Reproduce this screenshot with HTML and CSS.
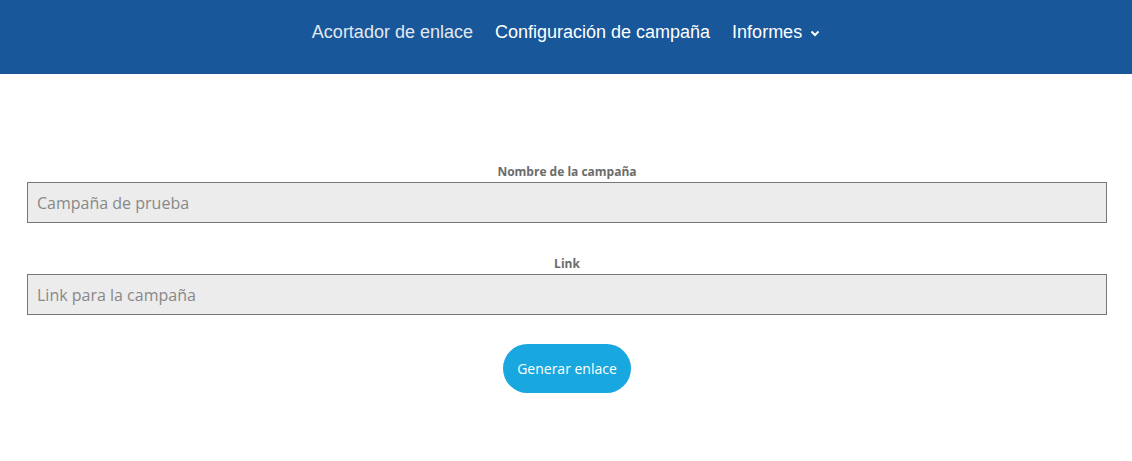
FILE: index.html
```html
<!DOCTYPE html>
<html lang="es">

<head>
    <meta charset="UTF-8">
    <meta name="viewport" content="width=device-width, initial-scale=1.0">
    <title>Acortador de enlace</title>
    <link rel="stylesheet" href="styles.css">
</head>

<body>

    <!-- barra de navegación -->
    <header class="topbar">
        <nav class="menu">
            <a href="#" class="menu_item dim">Acortador de enlace</a>
            <a href="#" class="menu_item">Configuración de campaña</a>
            <a href="#" class="menu_item">Informes
                <svg class="caret" width="10" height="7" viewBox="0 0 10 7">
                    <path d="M1.5 1.5 L5 5 L8.5 1.5" fill="none" stroke="#fff" stroke-width="2" />
                </svg>
            </a>
        </nav>
    </header>

    <!-- formulario de campaña -->
    <main class="form">
        <div class="field">
            <label class="field_label" for="campaign">Nombre de la campaña</label>
            <input class="field_input" id="campaign" type="text" placeholder="Campaña de prueba">
        </div>

        <div class="field last">
            <label class="field_label" for="link">Link</label>
            <input class="field_input" id="link" type="text" placeholder="Link para la campaña">
        </div>

        <div class="actions">
            <button class="btn" type="button">Generar enlace</button>
        </div>
    </main>

</body>

</html>
```

FILE: styles.css
```css
* {
    margin: 0;
    padding: 0;
    box-sizing: border-box;
}

body {
    font-family: "Open Sans", "Liberation Sans", sans-serif;
    background: #fff;
}

.topbar {
    height: 74px;
    background: #17579a;
    display: flex;
    justify-content: center;
    align-items: center;
    padding-bottom: 10px;
}

.menu {
    display: flex;
    gap: 22px;
}

.menu_item {
    font-family: "Liberation Sans", Arial, sans-serif;
    font-size: 18px;
    color: #fff;
    text-decoration: none;
    display: flex;
    align-items: center;
    gap: 8px;
}

.menu_item.dim {
    color: #e3e8ef;
}

.caret {
    margin-top: 2px;
}

.form {
    padding: 90px 25px 0 27px;
}

.field {
    display: flex;
    flex-direction: column;
    align-items: center;
    margin-bottom: 33px;
}

.field.last {
    margin-bottom: 29px;
}

.field_label {
    font-size: 12px;
    font-weight: 700;
    color: #6b6b6b;
    line-height: 16px;
    margin-bottom: 2px;
}

.field_input {
    width: 100%;
    height: 41px;
    background: #ececec;
    border: 1px solid #777;
    padding: 0 9px;
    font-family: "Open Sans", sans-serif;
    font-size: 16px;
    color: #333;
    outline: none;
}

.field_input::placeholder {
    color: #888;
}

.actions {
    display: flex;
    justify-content: center;
}

.btn {
    width: 128px;
    height: 49px;
    border: none;
    border-radius: 25px;
    background: #19a7e0;
    color: #fff;
    font-family: "Open Sans", sans-serif;
    font-size: 14px;
    cursor: pointer;
}
```
